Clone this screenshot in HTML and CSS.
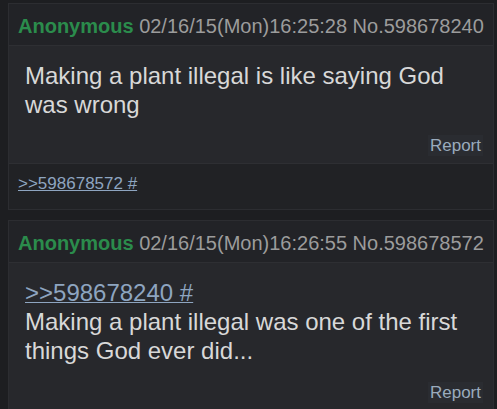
FILE: index.html
```html
<!DOCTYPE html>
<html>
<head>
<meta charset="utf-8">
<link rel="stylesheet" href="styles.css">
</head>
<body>
<div class="thread">
  <div class="post">
    <div class="post-head"><span class="name">Anonymous</span> <span class="meta">02/16/15(Mon)16:25:28 No.598678240</span></div>
    <div class="post-body">
      <div class="message">Making a plant illegal is like saying God was wrong</div>
      <div class="actions"><span class="report">Report</span></div>
    </div>
    <div class="backlinks"><a class="backlink" href="#">&gt;&gt;598678572 #</a></div>
  </div>
  <div class="post">
    <div class="post-head"><span class="name">Anonymous</span> <span class="meta">02/16/15(Mon)16:26:55 No.598678572</span></div>
    <div class="post-body">
      <div class="message"><a class="quotelink" href="#">&gt;&gt;598678240 #</a><br>Making a plant illegal was one of the first things God ever did...</div>
      <div class="actions actions-late"><span class="report">Report</span></div>
    </div>
  </div>
</div>
</body>
</html>
```
FILE: styles.css
```css
html, body {
  margin: 0;
  padding: 0;
  background: #1d1e21;
  font-family: "Liberation Sans", Arial, sans-serif;
}
.thread {
  padding: 3px 3px 0 8px;
  display: flex;
  flex-direction: column;
  gap: 10px;
}
.post {
  border: 1px solid #2c2d31;
  background: #27282c;
}
.post-head {
  background: #222327;
  border-bottom: 1px solid #2e2f33;
  padding: 11px 0 7px 9px;
  font-size: 20px;
  line-height: 23px;
  white-space: nowrap;
}
.name {
  color: #2b8c4c;
  font-weight: bold;
}
.meta {
  color: #9c9c9c;
}
.post-body {
  padding: 15px 10px 7px 16px;
}
.message {
  color: #d8d8d8;
  font-size: 24px;
  line-height: 29px;
}
.quotelink {
  color: #8ea5c0;
  text-decoration: underline;
  text-decoration-thickness: 1px;
}
.actions {
  display: flex;
  justify-content: flex-end;
  margin-top: 16px;
}
.actions-late {
  margin-top: 17px;
}
.report {
  color: #9aabbd;
  background: #2a2c31;
  font-size: 17px;
  line-height: 21px;
  padding: 0 2px;
}
.backlinks {
  background: #212225;
  border-top: 1px solid #2e2f33;
  padding: 10px 9px 15px;
  font-size: 17px;
  line-height: 20px;
}
.backlink {
  color: #8ea5c0;
  text-decoration: underline;
  text-decoration-thickness: 1px;
}
```
